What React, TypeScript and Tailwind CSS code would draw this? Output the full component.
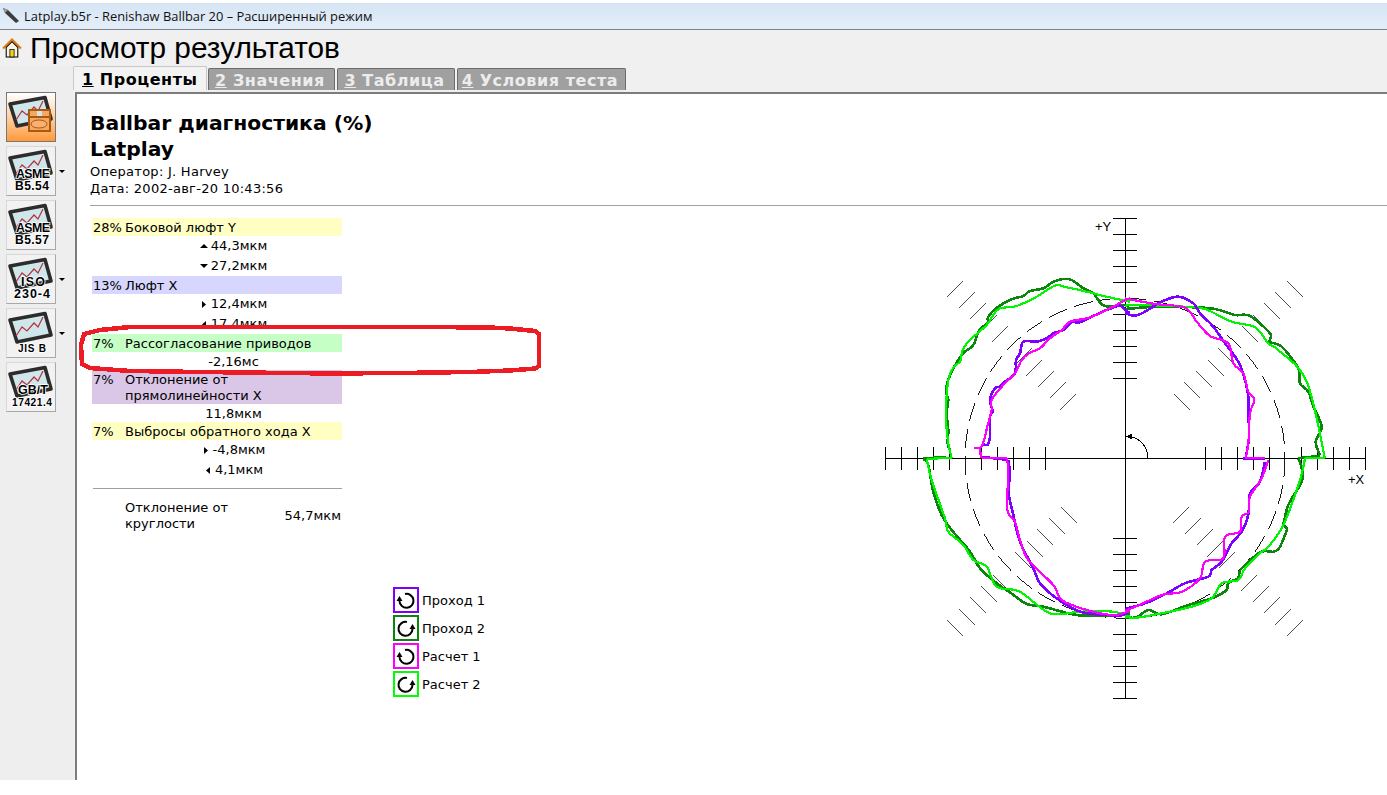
import React from "react";

type Pt = number[];
const conv = (ox: number, oy: number, a: Pt) => {
  const p: [number, number][] = [];
  for (let i = 0; i < a.length; i += 2) p.push([ox + a[i] / 3 - 880, oy + a[i + 1] / 3 - 210]);
  let d = `M${p[0][0].toFixed(1)} ${p[0][1].toFixed(1)}`;
  for (let i = 0; i < p.length - 1; i++) {
    const p0 = p[Math.max(0, i - 1)];
    const p1 = p[i];
    const p2 = p[i + 1];
    const p3 = p[Math.min(p.length - 1, i + 2)];
    const c1x = p1[0] + (p2[0] - p0[0]) / 6;
    const c1y = p1[1] + (p2[1] - p0[1]) / 6;
    const c2x = p2[0] - (p3[0] - p1[0]) / 6;
    const c2y = p2[1] - (p3[1] - p1[1]) / 6;
    d += ` C${c1x.toFixed(1)} ${c1y.toFixed(1)} ${c2x.toFixed(1)} ${c2y.toFixed(1)} ${p2[0].toFixed(1)} ${p2[1].toFixed(1)}`;
  }
  return d;
};
const Q = { ul: [880, 210], ur: [1125, 210], ll: [880, 455], lr: [1125, 455] } as const;

const traces: { color: string; w: number; segs: [keyof typeof Q, Pt][] }[] = [
  {
    color: "#0a860a",
    w: 2.6,
    segs: [
      ["ul", [130,745,185,742]],
      ["ul", [185,742,210,745]],
      ["ul", [210,720,203,700,205,660,200,610,205,570,198,545,205,510,220,475,250,430,280,405,298,360,322,340,325,320,350,293,395,268,430,258,450,243,490,235,520,215,550,207,575,210,610,235,640,250,665,283,690,290,735,285,750,298]],
      ["ur", [0,298,60,292,130,290,210,292,270,297,330,315,375,318,435,370,435,395,470,410,520,475,525,520,550,545,565,590,590,650,572,695,585,735]],
      ["ur", [585,737,520,745]],
      ["lr", [520,10,530,40,530,80,490,150,475,210]],
      ["lr", [475,210,487,222]],
      ["lr", [487,222,465,275,445,290,405,292,345,345]],
      ["lr", [345,345,340,370]],
      ["lr", [340,370,310,385,305,405,260,430,190,450,110,478,70,465,35,487,0,487]],
      ["ll", [130,12,145,30,160,110,185,180,215,225,270,290,300,340,350,385,390,412,440,447,490,455,590,480,680,482,750,475]],
    ],
  },
  {
    color: "#00f500",
    w: 2.2,
    segs: [
      ["ul", [215,745,205,700,198,620,205,510,222,470,240,455,248,420,268,392,320,345,355,298,410,288,470,260,525,227,560,232,620,245,680,260,735,272,750,275]],
      ["ur", [0,288,30,285,180,290,240,297,320,335,390,352,430,400,460,420,545,515,600,745]],
      ["ur", [600,745,540,745]],
      ["lr", [540,10,525,75,475,210,430,275,405,295,360,340,340,375,290,385,260,430,200,455,110,475,35,488,0,485]],
      ["ll", [215,8,140,12]],
      ["ll", [140,12,155,75,195,190,205,230,250,270,280,315,320,335,350,395,420,410,510,475,600,470,700,470,750,485]],
    ],
  },
  {
    color: "#8000ff",
    w: 2.6,
    segs: [
      ["ul", [305,700,322,705,330,680,330,620,338,605,330,570,345,535,360,530,375,515,405,490,408,450,420,430,430,395,470,395,500,385,520,370,550,360,575,337,600,337,640,318,680,300,720,287,735,300,750,310]],
      ["ur", [0,310,30,317,60,305,110,275,160,260,205,280,225,310,265,350,300,400,340,455,360,510,370,560,370,600,372,680,362,745]],
      ["ur", [355,745,420,745]],
      ["lr", [420,20,405,80,375,115,370,180,350,230,320,265,290,320,260,345,250,365,180,385,120,418,60,445,0,462]],
      ["ll", [300,5,385,15]],
      ["ll", [385,15,390,60,385,110,400,180,420,260,460,340,480,385,530,430,600,470,680,480,730,480,750,460]],
    ],
  },
  {
    color: "#ff00ff",
    w: 2.2,
    segs: [
      ["ul", [283,715,300,715]],
      ["ul", [300,715,303,745]],
      ["ul", [303,715,312,690,322,650,335,600,335,570,370,525,405,490,425,450,450,428,480,415,510,385,545,360,570,335,620,325,660,310,700,290,735,270,750,265]],
      ["ur", [0,265,25,270,90,282,180,293,215,335,255,378,310,400,325,460,355,490,370,545,388,570,375,610,370,700,362,745]],
      ["ur", [360,743,420,745]],
      ["lr", [430,15,410,70,375,125,372,170,350,185,345,230,300,245,295,310,240,320,225,370,170,410,110,420,50,447,0,468]],
      ["ll", [305,8,380,8]],
      ["ll", [380,8,385,50,382,165,405,200,420,255,445,315,520,390,545,435,620,465,700,480,750,468]],
    ],
  },
];

const CX = 245;
const CY = 248.3;
const radii = [80, 96, 112, 128, 144, 176, 192, 208, 224, 240];
const diag = [80, 96, 112, 128, 144, 176, 192, 208, 224, 240];

function Chart() {
  return (
    <svg width={490} height={500} className="-mt-[8px] ml-auto mr-[17px] shrink-0" shapeRendering="crispEdges">
      <circle cx={CX} cy={CY} r={160} fill="none" stroke="#000" strokeWidth={0.9} strokeDasharray="19 8" />
      <line x1={CX - 240} y1={CY} x2={CX + 240} y2={CY} stroke="#000" />
      <line x1={CX} y1={CY - 240} x2={CX} y2={CY + 240} stroke="#000" />
      {radii.map((r) => (
        <g key={r} stroke="#000">
          <line x1={CX + r} y1={CY - 11} x2={CX + r} y2={CY + 12} />
          <line x1={CX - r} y1={CY - 11} x2={CX - r} y2={CY + 12} />
          <line x1={CX - 12} y1={CY + r} x2={CX + 12} y2={CY + r} />
          <line x1={CX - 12} y1={CY - r} x2={CX + 12} y2={CY - r} />
        </g>
      ))}
      {diag.map((r) => {
        const d = r * Math.SQRT1_2;
        return (
          <g key={r} stroke="#000" strokeWidth={0.7}>
            <line x1={CX - d - 8} y1={CY - d + 8} x2={CX - d + 8} y2={CY - d - 8} />
            <line x1={CX + d - 8} y1={CY - d - 8} x2={CX + d + 8} y2={CY - d + 8} />
            <line x1={CX - d - 8} y1={CY + d - 8} x2={CX - d + 8} y2={CY + d + 8} />
            <line x1={CX + d - 8} y1={CY + d + 8} x2={CX + d + 8} y2={CY + d - 8} />
          </g>
        );
      })}
      <path d={`M ${CX + 4} ${CY - 22} A 22 22 0 0 1 ${CX + 23} ${CY}`} fill="none" stroke="#000" />
      <polygon points={`${CX + 1},${CY - 22} ${CX + 7},${CY - 25} ${CX + 7},${CY - 19}`} fill="#000" />
      {traces.map((t) =>
        t.segs.map(([q, pts], i) => (
          <path key={t.color + i} d={conv(Q[q][0], Q[q][1], pts)} fill="none" stroke={t.color} strokeWidth={t.w} />
        ))
      )}
      <text x={215} y={21} fontSize={13} fontFamily="Liberation Sans" fill="#000">+Y</text>
      <text x={468} y={274} fontSize={13} fontFamily="Liberation Sans" fill="#000">+X</text>
    </svg>
  );
}

function Tri({ dir }: { dir: "u" | "d" | "r" | "l" }) {
  const p = { u: "0,5 8,5 4,1", d: "0,1 8,1 4,5", r: "2,0 6,3.5 2,7", l: "6,0 2,3.5 6,7" }[dir];
  return (
    <svg width={8} height={7} className="mr-[3px]">
      <polygon points={p} fill="#000" />
    </svg>
  );
}

function Head({ pct, label, bg, tall }: { pct: string; label: React.ReactNode; bg: string; tall?: boolean }) {
  return (
    <div className={`flex ${bg} ${tall ? "h-[34px]" : "h-[18px]"} pl-px leading-[16px] pt-[2px]`}>
      <span className="w-[32px] shrink-0">{pct}</span>
      <span>{label}</span>
    </div>
  );
}

function Val({ v, dir, h = "h-[20px]" }: { v: string; dir?: "u" | "d" | "r" | "l"; h?: string }) {
  return (
    <div className={`flex items-center justify-center pl-[33px] ${h} ${dir ? "" : "pt-[2px]"}`}>
      {dir && <Tri dir={dir} />}
      <span>{v}</span>
    </div>
  );
}

function Legend({ label, border, cw }: { label: string; border: string; cw?: boolean }) {
  return (
    <div className="flex items-center h-[26px]">
      <div className={`w-[26px] h-[26px] border-2 ${border} flex items-center justify-center`}>
        <svg width={22} height={22} viewBox="2 2 22 22" style={cw ? { transform: "scaleX(-1)" } : undefined}>
          <path d="M12 7 A7 7 0 1 1 6.5 14" fill="none" stroke="#000" strokeWidth={2} />
          <polygon points="3.5,14 9.5,14 6.5,9" fill="#000" />
        </svg>
      </div>
      <span className="ml-[3px] pt-[2px]">{label}</span>
    </div>
  );
}

function Label({ t, x = 25, y, w }: { t: string; x?: number; y: number; w: number }) {
  const size = Math.min(12.5, w / (t.length * 0.56));
  return (
    <text
      x={x}
      y={y}
      textLength={w}
      lengthAdjust="spacing"
      textAnchor="middle"
      fontFamily="Liberation Sans"
      fontWeight={700}
      fontSize={size}
      fill="#000"
      stroke="#fff"
      strokeWidth={1.6}
      paintOrder="stroke"
    >
      {t}
    </text>
  );
}

function Icon({ a, b, aw = 34, bw = 34, pie }: { a?: string; b?: string; aw?: number; bw?: number; pie?: boolean }) {
  return (
    <svg width={48} height={48} className="block">
      <polygon points="3,11 38,4.5 44,26 10,33" fill="#cfe7ea" stroke="#2c2c2c" strokeWidth={3.6} strokeLinejoin="round" />
      <polyline points="9,27 15,18 20,22 27,14 31,18 36,8" fill="none" stroke="#b83040" strokeWidth={1.2} />
      {pie && (
        <g>
          <rect x={22} y={17} width={21} height={21} fill="#f7a860" stroke="#a85a10" strokeWidth={2} />
          <line x1={23} y1={24} x2={42} y2={24} stroke="#a85a10" strokeWidth={2} />
          <ellipse cx={32} cy={31} rx={8} ry={4} fill="#f9b070" stroke="#a85a10" />
          <rect x={30} y={18} width={5} height={5} fill="#cfe7ea" />
        </g>
      )}
      {a && <Label t={a} y={31} w={aw} x={26} />}
      {b && <Label t={b} y={43} w={bw} x={25} />}
    </svg>
  );
}

function SideBtn({ a, b, aw, bw, drop }: { a?: string; b?: string; aw?: number; bw?: number; drop?: boolean }) {
  return (
    <div className="flex items-center h-[50px]">
      <div className="w-[50px] h-[50px] bg-[#f2f2f2] border border-t-[#d8d8d8] border-l-[#d8d8d8] border-r-[#a8a8a8] border-b-[#a8a8a8] shrink-0">
        <Icon a={a} b={b} aw={aw} bw={bw} />
      </div>
      {drop && <div className="ml-[3px] w-0 h-0 border-l-[3px] border-r-[3px] border-t-[3px] border-l-transparent border-r-transparent border-t-black" />}
    </div>
  );
}

function Tab({ n, label, active }: { n: string; label: string; active?: boolean }) {
  return (
    <div
      className={
        active
          ? "h-[24px] w-[134px] bg-[#f3f3f3] border-t border-l border-r border-[#c8c8c8] rounded-t-[2px] flex items-center pl-[8px] pt-[3px] text-black"
          : "h-[22px] bg-[#a0a0a0] border-t border-l border-r border-[#6c6c6c] rounded-t-[2px] flex items-center text-[#ececec] justify-center pt-[3px] pr-[3px]"
      }
    >
      <span className="font-bold text-[16px] tracking-[0.55px] whitespace-pre">
        <span className="underline">{n}</span> {label}
      </span>
    </div>
  );
}

export default function App() {
  return (
    <div className="relative w-[1387px] h-[795px] bg-white overflow-hidden text-[13px] text-black" style={{ fontFamily: '"DejaVu Sans", sans-serif' }}>
      <div className="h-[3px] bg-white" />
      <div className="h-[27px] bg-gradient-to-b from-[#d6e5f4] to-[#e4eef9] border-b border-[#7a8490] flex items-center pl-[2px]" style={{ fontFamily: '"Open Sans", sans-serif' }}>
        <svg width={18} height={18} viewBox="0 0 18 18">
          <path d="M1 1 L6 3 L17 14 L14 16 L3 6 Z" fill="#3c3c3c" />
          <path d="M1 1 L3 6 L6 3 Z" fill="#999" />
        </svg>
        <span className="ml-[4px] text-[12.9px] text-[#101010] pt-px">Latplay.b5r - Renishaw Ballbar 20 – Расширенный режим</span>
      </div>
      <div className="h-[750px] bg-[#f0f0f0] flex flex-col">
        <div className="h-[36px] flex items-center pl-[2px]" style={{ fontFamily: '"Liberation Sans", sans-serif' }}>
          <svg width={20} height={20} viewBox="0 0 19 19">
            <path d="M1 10 L9.5 1.5 L18 10" fill="none" stroke="#e07a10" strokeWidth={2} />
            <path d="M4 9 L4 18 L15 18 L15 9 L9.5 3.5 Z" fill="#f8f4e4" stroke="#000" strokeWidth={1} />
            <rect x={7.5} y={11} width={4} height={7} fill="#f4d020" stroke="#000" strokeWidth={0.7} />
          </svg>
          <span className="ml-[8px] text-[29.8px] leading-none">Просмотр результатов</span>
        </div>
        <div className="flex flex-1 min-h-0">
          <div className="w-[73px] shrink-0 bg-[#eeeeee] pt-[26px] pl-[6px] flex flex-col gap-[4px]">
            <div className="w-[50px] h-[50px] bg-gradient-to-b from-[#ffffff] to-[#ff9a33] border border-[#777] shrink-0">
              <Icon pie />
            </div>
            <SideBtn a="ASME" b="B5.54" drop />
            <SideBtn a="ASME" b="B5.57" />
            <SideBtn a="ISO" aw={24} b="230-4" bw={36} drop />
            <SideBtn b="JIS B" bw={28} drop />
            <SideBtn a="GB/T" aw={30} b="17421.4" bw={40} />
          </div>
          <div className="flex-1 flex flex-col min-w-0">
            <div className="h-[24px] flex items-end gap-[1px]">
              <Tab n="1" label="Проценты" active />
              <div className="w-[127px]"><Tab n="2" label="Значения" /></div>
              <div className="ml-[1px] w-[118px]"><Tab n="3" label="Таблица" /></div>
              <div className="ml-[1px] w-[169px]"><Tab n="4" label="Условия теста" /></div>
            </div>
            <div className="h-[2px] bg-[#f0f0f0]" />
            <div className="flex-1 ml-[2px] border-t-2 border-l-2 border-[#7c7c7c] bg-white pt-[16px] min-h-0">
              <div className="pl-[13px]">
                <div className="text-[20.3px] leading-[26px] font-bold">Ballbar диагностика (%)</div>
                <div className="text-[20.3px] leading-[26px] font-bold">Latplay</div>
                <div className="mt-[2px] leading-[16px] tracking-[0.27px]">Оператор: J. Harvey</div>
                <div className="mt-px leading-[16px] tracking-[0.27px]">Дата: 2002-авг-20 10:43:56</div>
              </div>
              <div className="ml-[13px] mt-[8px] h-px bg-[#a0a0a0]" />
              <div className="mt-[12px] pl-[15px] flex items-start">
                <div className="w-[250px] shrink-0">
                  <Head pct="28%" label="Боковой люфт Y" bg="bg-[#ffffc4]" />
                  <Val v="44,3мкм" dir="u" />
                  <Val v="27,2мкм" dir="d" />
                  <Head pct="13%" label="Люфт X" bg="bg-[#d6d6ff]" />
                  <Val v="12,4мкм" dir="r" />
                  <Val v="17,4мкм" dir="l" />
                  <Head pct="7%" label="Рассогласование приводов" bg="bg-[#c6ffc6]" />
                  <Val v="-2,16мс" h="h-[18px]" />
                  <Head pct="7%" label={<>Отклонение от<br />прямолинейности X</>} bg="bg-[#dac6e6]" tall />
                  <Val v="11,8мкм" h="h-[18px]" />
                  <Head pct="7%" label="Выбросы обратного хода X" bg="bg-[#ffffc4]" />
                  <Val v="-4,8мкм" dir="r" />
                  <Val v="4,1мкм" dir="l" />
                  <div className="mt-[8px] ml-px h-px bg-[#a0a0a0]" />
                  <div className="mt-[11px] flex items-center pl-[33px] pr-px leading-[16px]">
                    <span className="flex-1">Отклонение от<br />круглости</span>
                    <span>54,7мкм</span>
                  </div>
                </div>
                <div className="ml-[51px] mt-[369px] flex flex-col gap-[2px]">
                  <Legend label="Проход 1" border="border-[#8000ff]" />
                  <Legend label="Проход 2" border="border-[#0a860a]" cw />
                  <Legend label="Расчет 1" border="border-[#ff00ff]" />
                  <Legend label="Расчет 2" border="border-[#00ff00]" cw />
                </div>
                <Chart />
              </div>
            </div>
          </div>
        </div>
      </div>
      <svg className="absolute left-0 top-0 pointer-events-none" width={1387} height={795}>
        <polyline
          points="130,327 420,327 490,327.5 510,328.5 535,331 539,334 539,366 535,368.5 510,370.5 470,372 400,373 330,373.5 200,372 130,371 90,368 82,364 81,345 84,334 100,330 130,327"
          fill="none"
          stroke="#ed1c24"
          strokeWidth={4.5}
          shapeRendering="crispEdges"
        />
      </svg>
    </div>
  );
}
